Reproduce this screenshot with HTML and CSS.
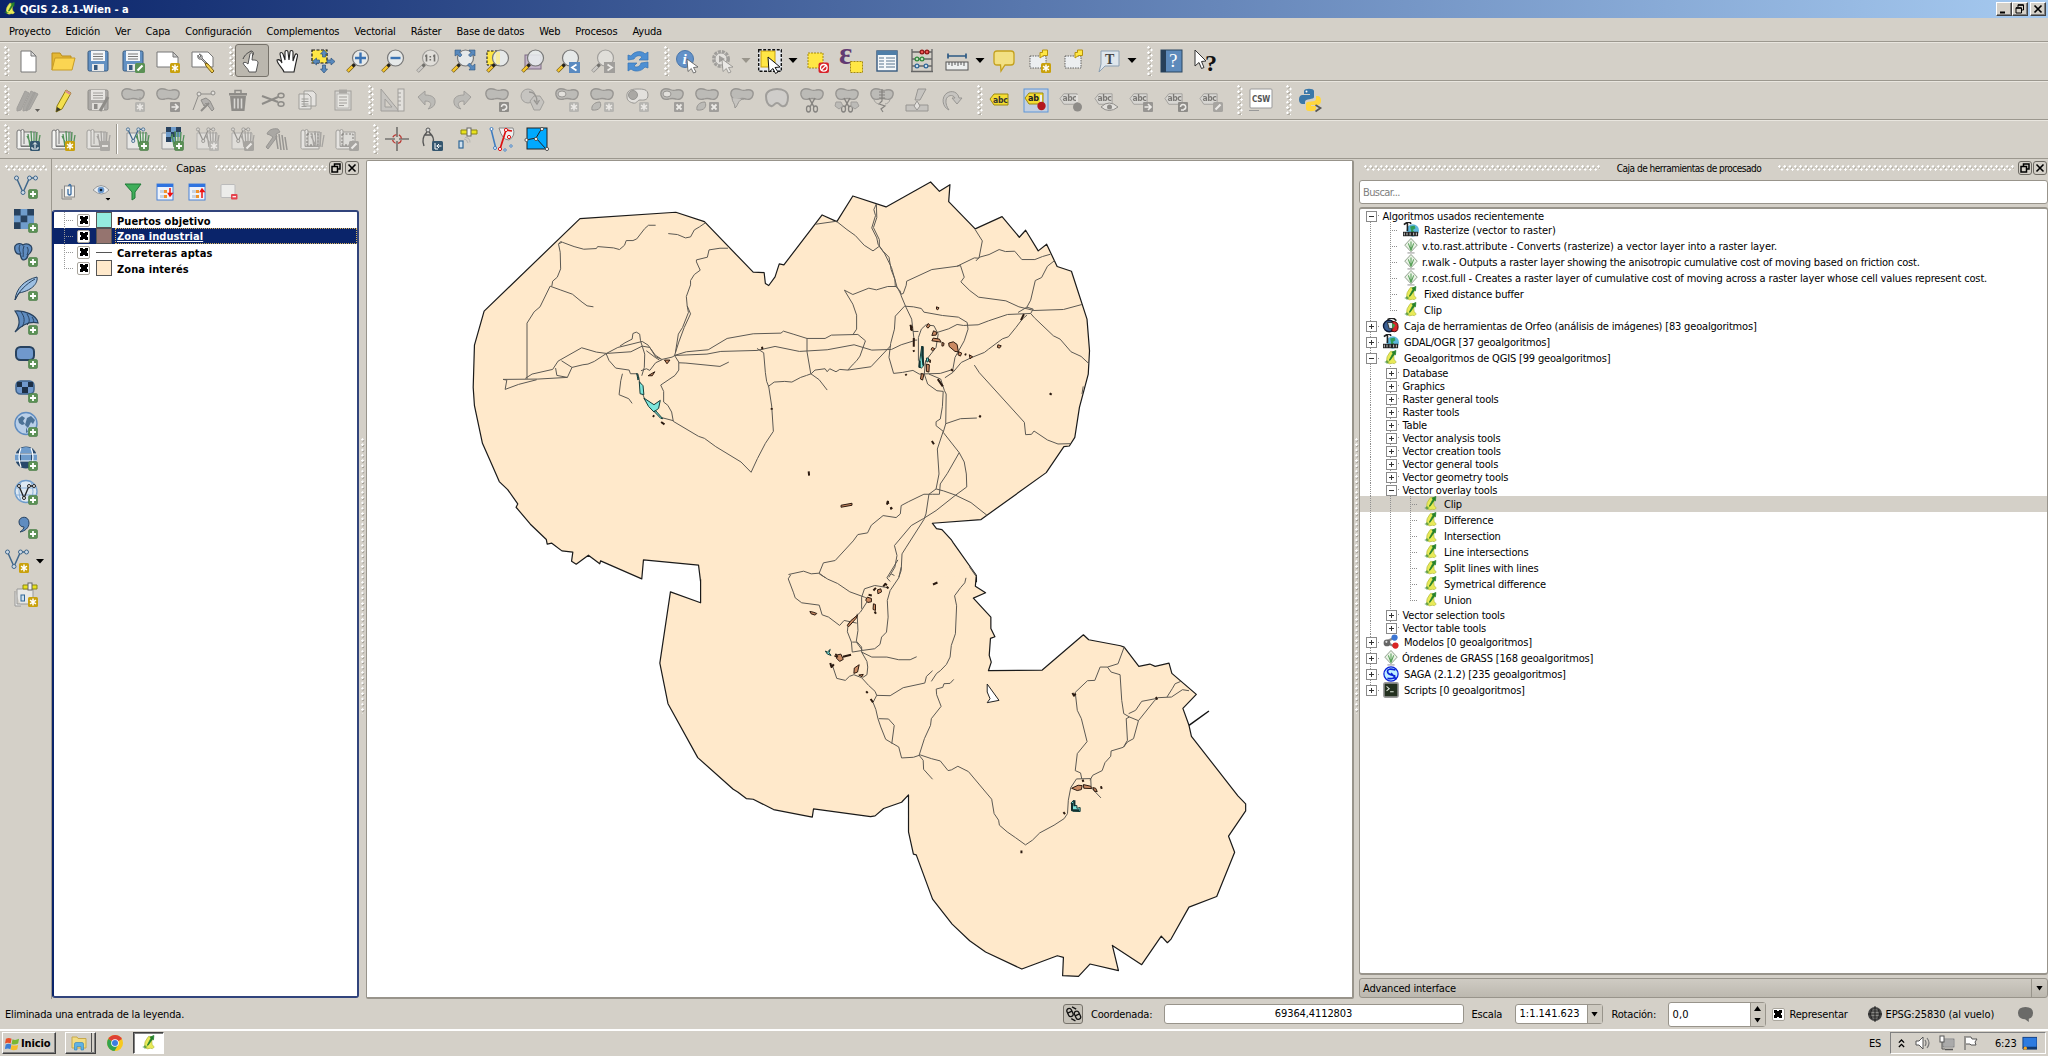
FILE: index.html
```html
<!DOCTYPE html>
<html lang="es">
<head>
<meta charset="utf-8">
<title>QGIS 2.8.1-Wien - a</title>
<link rel="stylesheet" href="styles.css">
</head>
<body>
<svg class="defs" width="0" height="0">
  <defs>
    <!-- corner badges -->
    <g id="b-plus"><rect x="14.5" y="14.5" width="9" height="9" rx="1.5" fill="#5b9155" stroke="#467a45" stroke-width=".6"/><path d="M19 16v6M16 19h6" stroke="#fff" stroke-width="1.8"/></g>
    <g id="b-star"><rect x="14" y="14" width="10" height="10" rx="1.5" fill="#c9a10c"/><path d="M19 15.5v7M16 17.2l6 3.6M22 17.2l-6 3.6" stroke="#fff" stroke-width="1.5"/></g>
    <g id="b-pen"><rect x="14" y="14" width="10" height="10" rx="1.5" fill="#5b9155"/><path d="M16.5 21.5l5-5" stroke="#fff" stroke-width="2.2"/></g>
    <g id="b-x"><rect x="14" y="14" width="10" height="10" rx="1" fill="#777"/><path d="M16.5 16.500l5 5M21.500 16.500l-5 5" stroke="#fff" stroke-width="1.8"/></g>
    <g id="b-arr"><rect x="14" y="14" width="10" height="10" rx="1" fill="#666"/><path d="M15.500 19h6M19 16l3 3-3 3" stroke="#fff" stroke-width="1.7" fill="none"/></g>
    <g id="b-rot"><rect x="14" y="14" width="10" height="10" rx="1" fill="#555"/><path d="M16.500 19a2.600 2.600 0 1 1 3 2.600M17 22h3" stroke="#fff" stroke-width="1.500" fill="none"/></g>
    <g id="b-minus"><rect x="14" y="14" width="10" height="10" rx="1" fill="#888"/><path d="M16 19h6" stroke="#fff" stroke-width="1.800"/></g>
    <g id="b-up"><rect x="14" y="14" width="10" height="10" rx="1.500" fill="#34566f"/><path d="M16 20v2h6v-2M19 21v-5M17.200 17.500L19 15.500l1.800 2" stroke="#fff" fill="none"/></g>
    <g id="b-lt"><rect x="13" y="13" width="11" height="11" fill="#5a8ac0"/><path d="M20.500 15.500L16 18.500l4.500 3" stroke="#fff" stroke-width="1.800" fill="none"/></g>
    <g id="b-gt"><rect x="13" y="13" width="11" height="11" fill="#777"/><path d="M16.500 15.500l4.500 3-4.500 3" stroke="#fff" stroke-width="1.800" fill="none"/></g>
    <!-- shapes shared by several icons -->
    <g id="lens"><path d="M1.500 22.500l7-7" stroke="#6a5410" stroke-width="3.600"/><path d="M1.800 22.200l5-5" stroke="#f5c52e" stroke-width="2.400"/><path d="M6.500 17.500l2.500-2.500" stroke="#222" stroke-width="2.600"/><circle cx="14.500" cy="9" r="8" fill="#e9edee" fill-opacity=".85" stroke="#777" stroke-width="1.200"/></g>
    <g id="vee"><path d="M2.500 3L9 17.500 15.500 3H22" fill="none" stroke="#3f678c" stroke-width="1.500"/><g fill="#cfdbe6" stroke="#3f678c"><circle cx="2.500" cy="3" r="2"/><circle cx="9" cy="17.500" r="2"/><circle cx="15.500" cy="3" r="2"/><circle cx="21.500" cy="3" r="2"/></g></g>
    <path id="blob" d="M1 7C0 2 4 0 8 1c4 1 5 2 8 1 5-1 8 1 7 5-1 4-4 5-7 4-3-.500-4-1-7 0-4 1-7 0-8-4z" fill="#aaa" stroke="#666" stroke-width="1.300"/>
    <g id="scroll"><path d="M4 5h16v14H4z" fill="#e6e6e4" stroke="#777"/><path d="M1 5a1.500 1.500 0 0 1 4 0v14.500h14V22H2.500A1.500 1.500 0 0 1 1 20zM5 4a1.500 1.500 0 0 1 3 0v13" fill="#f4f4f2" stroke="#777"/></g>
    <path id="grass" d="M15 20l-2-13M17 20l-1-16M19 20V5M21 20l1-15M23 20l2-12M12 9l4 8" transform="translate(-1)" stroke="#52915a" stroke-width="1.300" fill="none"/>
    <path id="cursor" d="M11 10l11 8-4.500.500 2.500 4.500-2.500 1-2.200-4.500L12 22.500z" fill="#fff" stroke="#555" stroke-width=".8"/>
    <path id="tag" d="M0 9l4-5h14v11H4z"/>

    <g id="i-new"><path d="M5 2h10l5 5v16H5z" fill="#fff" stroke="#777"/><path d="M15 2v5h5z" fill="#ddd" stroke="#777"/></g>
    <g id="i-open"><path d="M1 21V4h8l2 3h9v3" fill="#e5b835" stroke="#b98c1c"/><path d="M1 21L4 9h20l-3 12z" fill="#fbd552" stroke="#c79b25"/></g>
    <g id="i-save"><rect x="2" y="2" width="20" height="20" rx="1.500" fill="#6391c3" stroke="#36597e"/><path d="M5 2h14v10H5z" fill="#f4f6f8"/><path d="M7 5h10M7 7.500h10M7 10h10" stroke="#777"/><rect x="6" y="15" width="12" height="7" fill="#e8e8e8"/><rect x="8" y="16" width="3.500" height="5" fill="#36597e"/></g>
    <g id="i-compose"><path d="M1 3h16l5 5v10H1z" fill="#fff" stroke="#777"/><path d="M17 3v5h5z" fill="#ccc" stroke="#777"/></g>
    <g id="i-manage"><path d="M1 3h16l5 5v10H1z" fill="#fff" stroke="#777"/><path d="M7 6c-1 3 1 5 3 4l7 7 1-1-7-7c1-2-1-4-3-4l2 2-1.500 1.500z" fill="#bbb" stroke="#555" stroke-width=".800"/><path d="M14 14l3 1 6 7-2 2-6-7z" fill="#f1cf4e" stroke="#7a5f14"/></g>
    <g id="i-touch"><path d="M9 23C8 19 4 17 3 14c1-1 3-1 5 1L10 5c1-2 3-1 2.600 1L12 11c3 0 6 0 6 3l-2 9z" fill="#fff" stroke="#555"/><path d="M3 10c2-5 5-6 8-8M11 2c3 0 3 4 1 5" fill="none" stroke="#444"/></g>
    <g id="i-hand"><path d="M8 23C7 19 1 15 1 11c2-1 4 1 5 3L4 5c0-2 2-2 3 0l2 6L9 3c0-2 3-2 3 0l1 8 1-8c0-2 3-2 3 0v9l2-6c1-2 3-1 2.500 1C20 13 19 18 18 23z" fill="#fff" stroke="#222" stroke-width="1.100"/></g>
    <g id="i-pansel"><path d="M1 1h15v13H1z" fill="#ffe745" stroke="#111" stroke-dasharray="3 1.500" stroke-width="1.200"/><path d="M13 1l3.500 4h-2v3h-3V5h-2zM13 24l3.500-4h-2v-4h-3v4h-2zM1.500 12.500l4-3.500v2h3v3h-3v2zM24 12.500L20 9v2h-4v3h4v2z" fill="#5889bd" stroke="#2f557e" stroke-width=".700"/></g>
    <g id="i-zin"><use href="#lens"/><path d="M14.500 3.500v11M9 9h11" stroke="#3a73b4" stroke-width="2.400"/></g>
    <g id="i-zout"><use href="#lens"/><path d="M9.500 9h10" stroke="#3a73b4" stroke-width="2.400"/></g>
    <g id="i-z11"><use href="#lens"/><path d="M10.500 5.500v7M9 7h1.500M18.500 5.500v7M17 7h1.500M14.300 7v1.500M14.300 10v1.500" stroke="#222" stroke-width="1.600"/></g>
    <g id="i-zfull"><use href="#lens"/><path d="M4 1h6L8.500 3 11 6 9 8 6.500 5.500 4 7zM24 1v6l-2-1.500L19.500 8l-2-2L20 3.500 18 1zM24 21h-6l1.500-2-3-3 2-2 3 3L24 15z" fill="#5889bd" stroke="#2f557e" stroke-width=".600"/></g>
    <g id="i-zsel"><rect x="1" y="2" width="12" height="14" fill="#ffe745" stroke="#111" stroke-dasharray="2.500 1.500"/><use href="#lens"/><path d="M10 3h4v12h-4z" fill="#f7eca0"/></g>
    <g id="i-zlay"><rect x="4" y="6" width="16" height="14" fill="#c3b4c8" stroke="#7d6a84"/><use href="#lens"/></g>
    <g id="i-zlast"><use href="#lens"/><use href="#b-lt"/></g>
    <g id="i-znext"><use href="#lens"/><use href="#b-gt"/></g>
    <g id="i-refresh"><path d="M2 11V6l3 1c4-6 12-5 14-2l3-2v8h-9l3-3c-2-2-6-2-8 2zM22 13v6l-3-1c-4 5-11 5-14 2l-3 2v-8h9l-3 3c2 2 6 1 7-3z" fill="#4d8fd3" stroke="#3574b4" stroke-width=".700"/></g>
    <g id="i-info"><circle cx="9" cy="10" r="8.500" fill="#6391c8" stroke="#4a77ab"/><text x="6.500" y="15" font-family="Liberation Serif,serif" font-style="italic" font-weight="700" font-size="15" fill="#fff">i</text><use href="#cursor"/></g>
    <g id="i-action"><circle cx="10" cy="10" r="7.500" fill="#eee" stroke="#777" stroke-width="3" stroke-dasharray="3 1"/><circle cx="10" cy="10" r="6" fill="#eee" stroke="#777"/><path d="M8 6.500l6 3.500-6 3.500z" fill="#777"/><use href="#cursor"/></g>
    <g id="i-select"><rect x="0" y="0" width="24" height="22" fill="#e8ecf2"/><rect x="3" y="2" width="14" height="16" fill="#ffe745" stroke="#c9a10c"/><rect x=".7" y=".7" width="22.600" height="21.600" fill="none" stroke="#111" stroke-width="1.400" stroke-dasharray="3 1.500"/><path d="M10 8l12 10-5 .500 3 4.500-2.500 1.500-2.500-5-4 3.500z" fill="#fff" stroke="#111"/></g>
    <g id="i-desel"><rect x="3" y="4" width="15" height="15" fill="#ffe745" stroke="#a58a12" stroke-dasharray="2 1"/><rect x="13.500" y="13.500" width="10.500" height="10.500" rx="2" fill="#d8232a"/><circle cx="18.800" cy="18.800" r="3.300" fill="none" stroke="#fff" stroke-width="1.300"/><path d="M16.500 21l4.500-4.500" stroke="#fff" stroke-width="1.300"/></g>
    <g id="i-expr"><text x="-1" y="15" font-family="Liberation Serif,serif" font-weight="700" font-size="31" fill="#623a72">ε</text><rect x="10.500" y="12.500" width="12" height="11" fill="#ffe745" stroke="#a58a12" stroke-dasharray="2 1"/></g>
    <g id="i-table"><rect x="2" y="2" width="20" height="20" fill="#f5f8fa" stroke="#36597e" stroke-width="1.400"/><path d="M2 2h20v4H2z" fill="#4e7ea8"/><path d="M4 9h5M11 9h9M4 12h5M11 12h9M4 15h5M11 15h9M4 18h5M11 18h9" stroke="#59758d" stroke-width="1.200"/></g>
    <g id="i-abacus"><path d="M2 0v22M22 0v22M1 22.500h22M2 3h20M2 10h20M2 17h20" stroke="#666" stroke-width="1.300" fill="none"/><g stroke-width="1.200"><g fill="#e55" stroke="#901515"><circle cx="12" cy="3" r="1.900"/><circle cx="17" cy="3" r="1.900"/></g><g fill="#bdb" stroke="#2e8a3a"><circle cx="7" cy="10" r="1.900"/><circle cx="12" cy="10" r="1.900"/></g><g fill="#cde" stroke="#2f6797"><circle cx="7" cy="17" r="1.900"/><circle cx="16" cy="17" r="1.900"/></g></g></g>
    <g id="i-ruler"><path d="M3 7h18M3 4.500v5M21 4.500v5" stroke="#2d5a84" stroke-width="1.700"/><rect x="1" y="13" width="22" height="8" fill="#eef0f0" stroke="#555"/><path d="M4 13v3M7 13v4M10 13v3M13 13v4M16 13v3M19 13v4" stroke="#555"/></g>
    <g id="i-bubble"><path d="M5 2h14q3 0 3 3v8q0 3-3 3h-6l-4 6-.5-6H5q-3 0-3-3V5q0-3 3-3z" fill="#f2e083" stroke="#c4a01c" stroke-width="1.300"/></g>
    <g id="i-label"><rect x="3" y="7" width="16" height="12" fill="#eceef0" stroke="#444" stroke-width=".8" stroke-dasharray="1.500 1"/><path d="M13 3.500h2.500V1h5v5.500h-4L13 9z" fill="#ffe745" stroke="#b7930d"/></g>
    <g id="i-text"><path d="M4 2h18v15H8l-6 6 2-8z" fill="#dfe6ec" stroke="#8b9fb3"/><text x="8" y="14.500" font-family="Liberation Serif,serif" font-weight="700" font-size="14" fill="#444">T</text></g>
    <g id="i-help"><rect x="2" y="1" width="21" height="22" fill="#5d8abb" stroke="#2b4661"/><rect x="2" y="1" width="5" height="22" fill="#27405a"/><text x="10" y="18" font-family="Liberation Serif,serif" font-size="19" fill="#fff">?</text></g>
    <g id="i-what"><path d="M1 1l11 11-4.500.500 2.500 6-2.500 1-2.500-6L1 17z" fill="#fff" stroke="#333"/><text x="11" y="22" font-family="Liberation Serif,serif" font-weight="700" font-size="24" fill="#111">?</text></g>

    <g id="i-pencils"><path d="M1 20L9 3l4 2-8 17-4 1zM7 20l8-17 4 2-8 17-4 1zM11 19l7-15 4 2-8 15-4 2z" fill="#888" stroke="#777"/></g>
    <g id="i-pencil"><path d="M6 18L15 2l5 3-9 16-6 3z" fill="#f3df4e" stroke="#8d7c13"/><path d="M15 2l5 3-1 2-5-3z" fill="#d98f8f"/><path d="M5 24l1-5 4 2.500z" fill="#3b3b2b"/></g>
    <g id="i-node"><path d="M2 22L8 6h14" fill="none" stroke="#555"/><circle cx="8" cy="6" r="2" fill="#eee" stroke="#555"/><circle cx="22" cy="5" r="2" fill="#eee" stroke="#555"/><path d="M10 12l5-2 4 3 4 8-2 2-6-8-2 3z" fill="#999" stroke="#555"/><path d="M18 15l-8 8" stroke="#555" stroke-width="2"/></g>
    <g id="i-trash"><path d="M4 8h16l-1.500 15h-13z" fill="#555"/><path d="M3 5h18v2.500H3z" fill="#555"/><path d="M9 5V2.500h6V5" fill="none" stroke="#555" stroke-width="1.500"/><path d="M8.500 10.500v10M12 10.500v10M15.500 10.500v10" stroke="#ddd" stroke-width="1.600"/></g>
    <g id="i-cut"><path d="M1 8l16 6M1 16l16-7" stroke="#555" stroke-width="2"/><ellipse cx="20" cy="7.500" rx="3" ry="2.300" fill="none" stroke="#555" stroke-width="1.500"/><ellipse cx="20" cy="16" rx="3" ry="2.300" fill="none" stroke="#555" stroke-width="1.500"/></g>
    <g id="i-copy"><path d="M8 3h9l3 3v12H8zM3 6h9l3 3v12H3z" fill="#f4f4f4" stroke="#777"/><path d="M5.500 11h7M5.500 13.500h7M5.500 16h7M5.500 18.500h5" stroke="#777"/></g>
    <g id="i-paste"><rect x="4" y="3" width="16" height="19" fill="#ddd" stroke="#777"/><rect x="6" y="6" width="12" height="14" fill="#f8f8f8" stroke="#888" stroke-width=".700"/><rect x="8" y="1.500" width="8" height="4" fill="#888"/><path d="M8 9h8M8 12h8M8 15h8M8 17.500h5" stroke="#777"/></g>
    <g id="i-square"><path d="M1 1v22h18zM5 11v8h7z" fill="#bbb" fill-rule="evenodd" stroke="#777"/><rect x="18" y="1" width="6" height="22" fill="#eee" stroke="#777"/><path d="M18 5h3M18 9h3M18 13h3M18 17h3" stroke="#777"/></g>
    <g id="i-undo"><path d="M3 9l7-6v4c6 0 11 2 10 8-.5 3-3 5-7 6 4-4 4-8-3-8v4z" fill="#aaa" stroke="#777"/></g>
    <g id="i-simplify"><circle cx="8" cy="8" r="7" fill="#bbb" stroke="#777"/><path d="M10 13l4-5h6l4 6-4 8h-6z" fill="#bbb" stroke="#777"/><path d="M9 4c5 0 8 4 8 10M14 12l3 4 2.500-4" fill="none" stroke="#666" stroke-width="1.300"/></g>
    <g id="i-ring"><use href="#blob"/><ellipse cx="7" cy="6" rx="4" ry="3" fill="#eee" stroke="#666"/></g>
    <g id="i-part"><use href="#blob"/><path d="M2 22c-1-4 2-8 8-8 2 4 0 9-8 8z" fill="#aaa" stroke="#666"/></g>
    <g id="i-fillring"><path d="M2 9C1 3 6 1 12 1s11 0 11 6-5 5-8 5-3 4-7 3-6-3-6-6z" fill="#eee" stroke="#666"/><circle cx="8" cy="7" r="4.500" fill="#888" stroke="#666"/></g>
    <g id="i-reshape"><use href="#blob"/><path d="M2 10c0 4 3 5 3 10 3-2 3-9 9-9" fill="#bbb" stroke="#666"/></g>
    <path id="i-offset" d="M1 8c0-5 6-7 11-7s11 2 11 8-2 10-6 9c-3-1-2-3-5-3s-3 4-6 3-5-5-5-10z" fill="#ccc" stroke="#777" stroke-width="2"/>
    <g id="i-split"><use href="#blob"/><path d="M9 10l5 9M15 10l-5 9" stroke="#444" stroke-width="1.500"/><ellipse cx="8.500" cy="21" rx="2" ry="3" fill="none" stroke="#444" stroke-width="1.300"/><ellipse cx="15.500" cy="21" rx="2" ry="3" fill="none" stroke="#444" stroke-width="1.300"/></g>
    <g id="i-merge"><use href="#blob"/><path d="M12 1v12l-3 3 6 2-4 3 2 3M9 4h6M9 7h6M9 10h6" stroke="#444" fill="none" stroke-width="1.200"/><path d="M4 11c0 3 3 5 6 5M20 11c0 3-3 5-5 5" fill="none" stroke="#777"/></g>
    <g id="i-mergeattr"><path d="M13 1h8l-6 11h-5zM1 17h22v6H1z" fill="#bbb" stroke="#666"/><path d="M12 13l3 5-3 4-3-4z" fill="#eee" stroke="#666"/></g>
    <path id="i-rotsym" d="M9 22C2 19 1 9 7 5c5-3 11-1 12 5h3l-5 6-5-6h3c-2-4-8-3-9 2-.5 4 1 7 3 10z" fill="#bbb" stroke="#666"/>
    <g id="i-abc"><use href="#tag" transform="translate(1 2)" fill="#f4dc32" stroke="#9d8a10"/><text x="4" y="15" font-family="DejaVu Sans Condensed,sans-serif" font-weight="700" font-size="8.500" fill="#333" textLength="14.500">abc</text></g>
    <g id="i-abcpin"><rect x="0" y="1" width="24" height="23" fill="#c3cfe0" stroke="#5e96d8"/><use href="#tag" transform="translate(1 1)" fill="#f4dc32" stroke="#9d8a10"/><text x="4" y="13" font-family="DejaVu Sans Condensed,sans-serif" font-weight="700" font-size="9" fill="#222">ab</text><path d="M17 14V7" stroke="#eee" stroke-width="2"/><circle cx="17.500" cy="18" r="4.200" fill="#b3161e"/></g>
    <g id="i-abcg"><use href="#tag" transform="translate(1 2) scale(.95)" fill="#ddd" stroke="#777"/><text x="3.500" y="13" font-family="DejaVu Sans Condensed,sans-serif" font-weight="700" font-size="8.500" fill="#333" textLength="14">abc</text></g>
    <g id="i-pin"><use href="#i-abcg"/><path d="M18 14V7" stroke="#eee" stroke-width="2"/><circle cx="18.500" cy="19" r="4.500" fill="#555"/></g>
    <g id="i-eye"><use href="#i-abcg"/><path d="M7 19q8-8 17 0-9 7-17 0z" fill="#eee" stroke="#555"/><circle cx="15.500" cy="19" r="2.500" fill="#555"/></g>
    <g id="i-csw"><rect x="1" y="1" width="22" height="19" rx="1" fill="#fff" stroke="#999"/><path d="M0 22.500h10" stroke="#999"/><text x="3" y="13.500" font-family="DejaVu Sans Condensed,sans-serif" font-weight="700" font-size="8" fill="#555" textLength="18">CSW</text></g>
    <g id="i-python"><path d="M6 6V3c0-3 10-3 10 0v6c0 3-9 1-9 5v2H4C0 16 0 7 4 7h8V6z" fill="#3a77a8"/><circle cx="8.500" cy="3.500" r="1" fill="#fff"/><path d="M18 8h2c4 0 4 9 0 9h-7v1h5v3c0 3-10 3-10 0v-5c0-4 10-1 10-5z" fill="#ffd63e"/><path d="M17.500 17l5 3-5 3.500" fill="none" stroke="#555" stroke-width="1.700"/></g>

    <g id="i-gopen"><use href="#scroll"/><use href="#grass"/><use href="#b-up"/></g>
    <g id="i-gnew"><use href="#scroll"/><use href="#grass"/><use href="#b-star"/></g>
    <g id="i-gclose"><use href="#scroll"/><use href="#grass"/><use href="#b-minus"/></g>
    <g id="i-gvec"><path d="M2 6h20v16H2z" fill="#e8e8e6" stroke="#999"/><use href="#vee" transform="translate(1 0) scale(.8)"/><use href="#grass"/></g>
    <g id="i-gras"><path d="M2 6h18v16H2z" fill="#e8e8e6" stroke="#999"/><path d="M6 0h5v5H6zM11 5h5v5h-5zM6 10h5v5H6zM16 0h5v5h-5z" fill="#28425f"/><path d="M11 0h5v5h-5zM6 5h5v5H6zM16 5h5v5h-5zM11 10h5v5h-5z" fill="#6f9ccb"/><use href="#grass"/></g>
    <g id="i-gtool"><path d="M2 7c1-4 6-6 11-5l2 3-4 2 1 3-9 12-2-2 7-10-3-2z" fill="#888" stroke="#666"/><path d="M13 22L11 9M16 23L14 7M19 23L17 8M22 23L20 10" stroke="#666" stroke-width="1.500"/></g>
    <g id="i-greg"><use href="#scroll"/><rect x="7" y="7" width="11" height="11" fill="none" stroke="#333" stroke-dasharray="2 1.500"/></g>
    <g id="i-cross"><path d="M12 0v10M12 14v10M0 12h10M14 12h10" stroke="#444" stroke-width="1.100"/><circle cx="12" cy="12" r="4.500" fill="none" stroke="#b93a35" stroke-width="1.300" stroke-dasharray="4.500 2.600" stroke-dashoffset="-1.300"/></g>
    <g id="i-compass"><circle cx="8" cy="3" r="2" fill="#ddd" stroke="#555"/><path d="M7 5C2 10 2 14 4 19M9 5c5 5 5 8 4 10M5 8h6" fill="none" stroke="#555" stroke-width="1.400"/><rect x="12" y="14" width="11" height="10" rx="1.500" fill="#34566f"/><path d="M15 16v6h3M21.500 19h-5M19 17l-2 2 2 2" stroke="#fff" fill="none"/></g>
    <g id="i-gps"><path d="M6 3h16v4H6z" fill="#e9e21d" stroke="#8b8714"/><rect x="12" y="1" width="4" height="8" fill="#eee" stroke="#666"/><rect x="4" y="14" width="4" height="7" fill="#cfe0ee" stroke="#2f6797" stroke-width="1.200"/><path d="M9 12q3 0 4 4M10 10.500q5 0 5 5" fill="none" stroke="#aaa" stroke-width=".800"/></g>
    <g id="i-topo"><path d="M1 2l5 20" stroke="#3f7dc0" stroke-width="1.500"/><path d="M9 1h14q3 8-4 12-7 0-10-12z" fill="#eee" stroke="#888"/><path d="M10 22l6-19 6 1" fill="none" stroke="#d11" stroke-width="1.700"/><g fill="#fff" stroke="#d11"><circle cx="16" cy="3" r="1.600"/><circle cx="19" cy="10" r="1.600"/><circle cx="10" cy="22" r="1.600"/></g><g fill="#fff" stroke="#3f7dc0"><circle cx="1.500" cy="2" r="1.500"/><circle cx="5" cy="21" r="1.500"/><circle cx="15" cy="23" r="1.200"/><circle cx="21" cy="19" r="1.200"/></g></g>
    <g id="i-topol"><rect x="2" y="1" width="20" height="21" fill="#00a9ff" stroke="#222"/><path d="M1 13l10-2 6-10M11 11l10 11" fill="none" stroke="#222"/><g fill="#fff" stroke="#555"><circle cx="17" cy="2" r="1.600"/><circle cx="1.500" cy="13" r="1.600"/><circle cx="11" cy="12" r="1.600"/><circle cx="22" cy="22" r="1.600"/></g></g>

    <g id="l-ras"><path d="M0 0h20v20H0z" fill="#6f9ccb"/><path d="M0 0h6.600v6.600H0zM13.300 0H20v6.600h-6.700zM6.600 6.600h6.700v6.700H6.600zM0 13.300h6.600V20H0z" fill="#28425f"/><use href="#b-plus"/></g>
    <g id="l-pg"><path d="M1 3c2-3 6-3 8-1 3-2 6-1 8 1 2 3 0 7-3 9-1 5-6 7-7 2l-1-3C2 12 0 7 1 3z" fill="#5f8cc0" stroke="#28425f" stroke-width="1.300"/><path d="M6 2C4 6 6 9 7 11M10 3c-2 5 0 7-1 11M13 4c2 3 1 5 0 8" fill="none" stroke="#28425f"/><use href="#b-plus"/></g>
    <g id="l-feather"><path d="M1 23C2 12 10 3 23 0c1 5-3 13-18 16z" fill="#9dbfe2" stroke="#28425f"/><path d="M1 23C5 14 12 7 21 2" fill="none" stroke="#28425f"/><use href="#b-plus"/></g>
    <g id="l-mssql"><path d="M1 0c9-1 22 4 23 12-8-2-15 1-23 9C7 14 6 7 1 0z" fill="#5f8cc0" stroke="#28425f" stroke-width="1.200"/><path d="M7 1c4 5 4 10 1 15M13 3c3 5 3 8 0 11M18 6c2 3 2 4 1 6" fill="none" stroke="#28425f"/><use href="#b-plus"/></g>
    <g id="l-ora"><rect x="2" y="2" width="18" height="13" rx="4.500" fill="#7098cc" stroke="#28425f" stroke-width="2"/><use href="#b-plus"/></g>
    <g id="l-orar"><rect x="2" y="2" width="18" height="13" rx="4.500" fill="#7098cc" stroke="#3d628c" stroke-width="1.500"/><path d="M3 3h5v5H3zM14 3h5v5h-5zM8 8h6v6H8z" fill="#1d3047"/><use href="#b-plus"/></g>
    <g id="l-wms"><circle cx="12" cy="10.500" r="11" fill="#b9cfe8" stroke="#5f8cc0" stroke-width="1.400"/><path d="M4 6l4-3 3 2-2 3 2 3-3 1-3-2zM13 5l4-2 4 4-2 4-2-2-3 6-3-3zM12 14l2 5-2 1z" fill="#4c7296"/><use href="#b-plus"/></g>
    <g id="l-wcs"><circle cx="12" cy="10.500" r="11" fill="#28486b"/><path d="M6 2Q9 0 12 0t6 2l1 4H5zM1 7h5v7H1zM18 7h5v7h-5zM7 7h10v7H7z" fill="#6f9ccb"/><path d="M1 7h22M1 14h22M7 1q-4 9 0 19M17 1q4 9 0 19" fill="none" stroke="#fff" stroke-width="1.200"/><use href="#b-plus"/></g>
    <g id="l-wfs"><circle cx="12" cy="10.500" r="11" fill="#dfe9f2" stroke="#6f9ccb" stroke-width="1.300"/><path d="M1 7h22M1 14h22M7 1q-4 9 0 19M17 1q4 9 0 19" fill="none" stroke="#8ab0d8"/><path d="M5 5l5 12 5-12h5" fill="none" stroke="#222" stroke-width="1.300"/><g fill="#fff" stroke="#222"><circle cx="5" cy="5" r="1.500"/><circle cx="10" cy="17" r="1.500"/><circle cx="15" cy="5" r="1.500"/><circle cx="20" cy="5" r="1.500"/></g><use href="#b-plus"/></g>
    <g id="l-comma"><path d="M5 7c0-6 10-7 10 1 0 5-4 8-9 9 3-2 4-4 4-5-3 0-5-2-5-5z" fill="#5f8cc0" stroke="#28425f"/><use href="#b-plus"/></g>
    <g id="l-gps"><path d="M3 6h16v15H3zM1 8v15h6" fill="#e8e8e6" stroke="#999"/><path d="M9 2h14v4H9z" fill="#e9e21d" stroke="#8b8714"/><rect x="14" y="0" width="4" height="7" fill="#eee" stroke="#666"/><rect x="7" y="12" width="3.500" height="6" fill="#cfe0ee" stroke="#2f6797"/><use href="#b-star"/></g>

    <!-- processing providers, 18px grid -->
    <g id="p-qgis"><path d="M8.500 1.500q4-.500 5 2-2 4-1 7 1 2 2.500 3-2 3-4.500 1.500-4 2-6.500-1.500-1-6 4.500-12z" fill="#e9ea58" stroke="#a3ab3a" stroke-width=".600"/><path d="M14.500.5l-.5 5-1-1-5 7h-1l4.500-8.500-1.500-.500zM2 13.500h5M4.500 11.500v4" fill="#23802b" stroke="#23802b" stroke-width=".800"/></g>
    <g id="p-gdal"><circle cx="11" cy="9.500" r="7" fill="#5db7dd"/><path d="M8 5l5-1 1 3-3 2 3 4-4 2z" fill="#2f9c56"/><path d="M0 11h17v5H0z" fill="#222"/><path d="M1.500 12v3M4.500 12v3M8 12v3M12 12v3M15 12v3" stroke="#ddd" stroke-width="1"/><path d="M1 3q6-5 8-1M5 1v9" fill="none" stroke="#222" stroke-width="1.800"/></g>
    <g id="p-grass"><path d="M9 .5l7 7.500-7 7.500L2 8z" fill="#e9f2e5" stroke="#8fa08c" stroke-width="1.100"/><path d="M9 14L6 6M9 14V4M9 14l3-8" stroke="#58a058" stroke-width="1.200"/><path d="M5 16.800h8" stroke="#999" stroke-width="1.200"/></g>
    <g id="p-otb"><circle cx="7" cy="9" r="6.500" fill="#3a5f94" stroke="#0d1a38" stroke-width="1.500"/><path d="M10 4q7-1 7 6t-7 5z" fill="#d8252b" stroke="#300"/><path d="M5 5h6v7H7z" fill="#dce8ef" stroke="#222"/><path d="M10 6l4 2-3 4z" fill="#3aa04b"/><path d="M5 2q6-4 10 1" fill="none" stroke="#222" stroke-width="1.800"/></g>
    <g id="p-model"><path d="M3 9l10-5M5 10l8 4" stroke="#888" stroke-width="2.500"/><circle cx="4.500" cy="10" r="3.800" fill="#666"/><circle cx="13" cy="4" r="3.500" fill="#3c75d2"/><circle cx="14" cy="13" r="3.500" fill="#d92525"/><circle cx="3.800" cy="8.800" r="1.200" fill="#ddd"/></g>
    <g id="p-saga"><circle cx="9" cy="9" r="8" fill="#bff0ff" stroke="#0a22d8" stroke-width="1.400"/><path d="M14 4.500Q5 2 5 6t8 5q1 4-8 3M9 8l6 7" fill="none" stroke="#0a22d8" stroke-width="1.900"/></g>
    <g id="p-script"><rect x="1" y="1" width="16" height="16" rx="1.500" fill="#23301f" stroke="#999" stroke-width="1.800"/><path d="M4 5l3 2.500L4 10M8 11h4" fill="none" stroke="#dfe8dc" stroke-width="1.200"/></g>
  </defs>
</svg>

<div class="window">
  <header class="titlebar">
    <svg width="14" height="16" viewBox="0 0 18 18"><use href="#p-qgis"/></svg>
    <h1>QGIS 2.8.1-Wien - a</h1>
    <div class="winbtns">
      <b><svg viewBox="0 0 12 10"><path d="M2 8.500h5" stroke="#000" stroke-width="2"/></svg></b>
      <b><svg viewBox="0 0 12 10"><path d="M4 3.500V.700h5.500V6H7M2 3.700h5.500V9H2zM2 4.300h5M4 1.300h5" fill="none" stroke="#000"/></svg></b>
      <b class="gap"><svg viewBox="0 0 12 10"><path d="M2.500 1.500l7 7M9.500 1.500l-7 7" stroke="#000" stroke-width="1.700"/></svg></b>
    </div>
  </header>
  <nav class="menubar"><span>Proyecto</span><span>Edición</span><span>Ver</span><span>Capa</span><span>Configuración</span><span>Complementos</span><span>Vectorial</span><span>Ráster</span><span>Base de datos</span><span>Web</span><span>Procesos</span><span>Ayuda</span></nav>

  <div class="toolbar">
    <i class="grip first"></i>
    <svg class="ic" viewBox="0 0 24 24"><use href="#i-new"/></svg>
    <svg class="ic" viewBox="0 0 24 24"><use href="#i-open"/></svg>
    <svg class="ic" viewBox="0 0 24 24"><use href="#i-save"/></svg>
    <svg class="ic" viewBox="0 0 24 24"><use href="#i-save"/><use href="#b-pen"/></svg>
    <svg class="ic" viewBox="0 0 24 24"><use href="#i-compose"/><use href="#b-star"/></svg>
    <svg class="ic" viewBox="0 0 24 24"><use href="#i-manage"/></svg>
    <i class="grip"></i>
    <span class="pressed"><svg viewBox="0 0 24 24"><use href="#i-touch"/></svg></span>
    <svg class="ic" viewBox="0 0 24 24"><use href="#i-hand"/></svg>
    <svg class="ic" viewBox="0 0 24 24"><use href="#i-pansel"/></svg>
    <svg class="ic" viewBox="0 0 24 24"><use href="#i-zin"/></svg>
    <svg class="ic" viewBox="0 0 24 24"><use href="#i-zout"/></svg>
    <svg class="ic off" viewBox="0 0 24 24"><use href="#i-z11"/></svg>
    <svg class="ic" viewBox="0 0 24 24"><use href="#i-zfull"/></svg>
    <svg class="ic" viewBox="0 0 24 24"><use href="#i-zsel"/></svg>
    <svg class="ic" viewBox="0 0 24 24"><use href="#i-zlay"/></svg>
    <svg class="ic" viewBox="0 0 24 24"><use href="#i-zlast"/></svg>
    <svg class="ic off" viewBox="0 0 24 24"><use href="#i-znext"/></svg>
    <svg class="ic" viewBox="0 0 24 24"><use href="#i-refresh"/></svg>
    <i class="grip"></i>
    <svg class="ic" viewBox="0 0 24 24"><use href="#i-info"/></svg>
    <svg class="ic off" viewBox="0 0 24 24"><use href="#i-action"/></svg>
    <i class="drop dim"></i>
    <svg class="ic" viewBox="0 0 24 24"><use href="#i-select"/></svg>
    <i class="drop"></i>
    <svg class="ic" viewBox="0 0 24 24"><use href="#i-desel"/></svg>
    <svg class="ic" viewBox="0 0 24 24"><use href="#i-expr"/></svg>
    <svg class="ic" viewBox="0 0 24 24"><use href="#i-table"/></svg>
    <svg class="ic" viewBox="0 0 24 24"><use href="#i-abacus"/></svg>
    <svg class="ic" viewBox="0 0 24 24"><use href="#i-ruler"/></svg>
    <i class="drop"></i>
    <svg class="ic" viewBox="0 0 24 24"><use href="#i-bubble"/></svg>
    <svg class="ic" viewBox="0 0 24 24"><use href="#i-label"/><use href="#b-star"/></svg>
    <svg class="ic" viewBox="0 0 24 24"><use href="#i-label"/></svg>
    <svg class="ic" viewBox="0 0 24 24"><use href="#i-text"/></svg>
    <i class="drop"></i>
    <i class="grip"></i>
    <svg class="ic" viewBox="0 0 24 24"><use href="#i-help"/></svg>
    <svg class="ic" viewBox="0 0 24 24"><use href="#i-what"/></svg>
  </div>

  <div class="toolbar">
    <i class="grip first"></i>
    <svg class="ic off" viewBox="0 0 24 24"><use href="#i-pencils"/><path d="M19 21h5l-2.500 3z" fill="#000"/></svg>
    <svg class="ic" viewBox="0 0 24 24"><use href="#i-pencil"/></svg>
    <svg class="ic off" viewBox="0 0 24 24"><use href="#i-save"/><path d="M14 23l8-14" stroke="#555" stroke-width="3"/></svg>
    <svg class="ic off" viewBox="0 0 24 24"><use href="#blob"/><path d="M19 9v4" stroke="#777"/><use href="#b-star"/></svg>
    <svg class="ic off" viewBox="0 0 24 24"><use href="#blob"/><use href="#b-arr"/></svg>
    <svg class="ic off" viewBox="0 0 24 24"><use href="#i-node"/></svg>
    <svg class="ic off" viewBox="0 0 24 24"><use href="#i-trash"/></svg>
    <svg class="ic off" viewBox="0 0 24 24"><use href="#i-cut"/></svg>
    <svg class="ic off" viewBox="0 0 24 24"><use href="#i-copy"/></svg>
    <svg class="ic off" viewBox="0 0 24 24"><use href="#i-paste"/></svg>
    <i class="grip tight"></i>
    <svg class="ic off" viewBox="0 0 24 24"><use href="#i-square"/></svg>
    <svg class="ic off" viewBox="0 0 24 24"><use href="#i-undo"/></svg>
    <svg class="ic off" viewBox="0 0 24 24"><use href="#i-undo" transform="matrix(-1 0 0 1 24 0)"/></svg>
    <svg class="ic off" viewBox="0 0 24 24"><use href="#blob"/><use href="#b-rot"/></svg>
    <svg class="ic off" viewBox="0 0 24 24"><use href="#i-simplify"/></svg>
    <svg class="ic off" viewBox="0 0 24 24"><use href="#i-ring"/><use href="#b-star"/></svg>
    <svg class="ic off" viewBox="0 0 24 24"><use href="#i-part"/><use href="#b-star"/></svg>
    <svg class="ic off" viewBox="0 0 24 24"><use href="#i-fillring"/><use href="#b-star"/></svg>
    <svg class="ic off" viewBox="0 0 24 24"><use href="#i-ring"/><use href="#b-x"/></svg>
    <svg class="ic off" viewBox="0 0 24 24"><use href="#i-part"/><use href="#b-x"/></svg>
    <svg class="ic off" viewBox="0 0 24 24"><use href="#i-reshape"/></svg>
    <svg class="ic off" viewBox="0 0 24 24"><use href="#i-offset"/></svg>
    <svg class="ic off" viewBox="0 0 24 24"><use href="#i-split"/></svg>
    <svg class="ic off" viewBox="0 0 24 24"><use href="#i-split"/><path d="M1 14h5l2 4-4 3-4-3zM16 14h6l2 4-4 3-4-3z" fill="#aaa" stroke="#777"/></svg>
    <svg class="ic off" viewBox="0 0 24 24"><use href="#i-merge"/></svg>
    <svg class="ic off" viewBox="0 0 24 24"><use href="#i-mergeattr"/></svg>
    <svg class="ic off" viewBox="0 0 24 24"><use href="#i-rotsym"/></svg>
    <i class="grip tight"></i>
    <svg class="ic" viewBox="0 0 24 24"><use href="#i-abc"/></svg>
    <svg class="ic" viewBox="0 0 24 24"><use href="#i-abcpin"/></svg>
    <svg class="ic off" viewBox="0 0 24 24"><use href="#i-pin"/></svg>
    <svg class="ic off" viewBox="0 0 24 24"><use href="#i-eye"/></svg>
    <svg class="ic off" viewBox="0 0 24 24"><use href="#i-abcg"/><use href="#b-arr"/></svg>
    <svg class="ic off" viewBox="0 0 24 24"><use href="#i-abcg"/><use href="#b-rot"/></svg>
    <svg class="ic off" viewBox="0 0 24 24"><use href="#i-abcg"/><use href="#b-pen"/></svg>
    <i class="grip"></i>
    <svg class="ic" viewBox="0 0 24 24"><use href="#i-csw"/></svg>
    <i class="grip tight"></i>
    <svg class="ic" viewBox="0 0 24 24"><use href="#i-python"/></svg>
  </div>

  <div class="toolbar">
    <i class="grip first"></i>
    <svg class="ic" viewBox="0 0 24 24"><use href="#i-gopen"/></svg>
    <svg class="ic" viewBox="0 0 24 24"><use href="#i-gnew"/></svg>
    <svg class="ic off" viewBox="0 0 24 24"><use href="#i-gclose"/></svg>
    <i class="sep"></i>
    <svg class="ic" viewBox="0 0 24 24"><use href="#i-gvec"/><use href="#b-plus"/></svg>
    <svg class="ic" viewBox="0 0 24 24"><use href="#i-gras"/><use href="#b-plus"/></svg>
    <svg class="ic off" viewBox="0 0 24 24"><use href="#i-gvec"/><use href="#b-star"/></svg>
    <svg class="ic off" viewBox="0 0 24 24"><use href="#i-gvec"/><use href="#b-pen"/></svg>
    <svg class="ic off" viewBox="0 0 24 24"><use href="#i-gtool"/></svg>
    <svg class="ic off" viewBox="0 0 24 24"><use href="#i-greg"/><use href="#grass"/></svg>
    <svg class="ic off" viewBox="0 0 24 24"><use href="#i-greg"/><use href="#b-pen"/></svg>
    <i class="grip wide"></i>
    <svg class="ic" viewBox="0 0 24 24"><use href="#i-cross"/></svg>
    <svg class="ic" viewBox="0 0 24 24"><use href="#i-compass"/></svg>
    <svg class="ic" viewBox="0 0 24 24"><use href="#i-gps"/></svg>
    <svg class="ic" viewBox="0 0 24 24"><use href="#i-topo"/></svg>
    <svg class="ic" viewBox="0 0 24 24"><use href="#i-topol"/></svg>
  </div>

  <main class="work">
    <aside class="sidebar">
      <i class="hgrip"></i>
      <svg viewBox="0 0 24 24"><use href="#vee"/><use href="#b-plus"/></svg>
      <svg viewBox="0 0 24 24"><use href="#l-ras"/></svg>
      <svg viewBox="0 0 24 24"><use href="#l-pg"/></svg>
      <svg viewBox="0 0 24 24"><use href="#l-feather"/></svg>
      <svg viewBox="0 0 24 24"><use href="#l-mssql"/></svg>
      <svg viewBox="0 0 24 24"><use href="#l-ora"/></svg>
      <svg viewBox="0 0 24 24"><use href="#l-orar"/></svg>
      <svg viewBox="0 0 24 24"><use href="#l-wms"/></svg>
      <svg viewBox="0 0 24 24"><use href="#l-wcs"/></svg>
      <svg viewBox="0 0 24 24"><use href="#l-wfs"/></svg>
      <svg viewBox="0 0 24 24"><use href="#l-comma"/></svg>
      <div class="withdrop"><svg viewBox="0 0 24 24"><use href="#vee"/><use href="#b-star"/></svg><i class="drop"></i></div>
      <svg viewBox="0 0 24 24"><use href="#l-gps"/></svg>
    </aside>

    <section class="dock layers">
      <div class="docktitle"><i class="hgrip"></i><span>Capas</span><i class="hgrip"></i>
        <b><svg viewBox="0 0 10 10"><path d="M3.500 3V1h5.500v5H7M1 3.500h5.500V9H1z" fill="none" stroke="#000" stroke-width="1.500"/></svg></b>
        <b><svg viewBox="0 0 10 10"><path d="M1.500 1.500l7 7M8.500 1.500l-7 7" stroke="#000" stroke-width="1.600"/></svg></b></div>
      <div class="layertools">
        <svg viewBox="0 0 18 18"><path d="M2 6v10h10" fill="none" stroke="#888"/><rect x="4.500" y="3" width="10" height="11" fill="#f4f4f2" stroke="#888"/><path d="M8 6v5q1.500 2 3 0V3q-1-3-2.500 0" fill="none" stroke="#3c6ea3" stroke-width="1.300"/></svg>
        <svg viewBox="0 0 18 18"><path d="M1 7q8-9 16 0-7 8-16 0z" fill="#e8edf2" stroke="#999"/><circle cx="9" cy="7" r="3.300" fill="#6c9bd0"/><circle cx="9" cy="7" r="1.300" fill="#123"/><path d="M13.500 15h5L16 17.500z"/></svg>
        <svg viewBox="0 0 18 18"><path d="M1 1h16l-6 8v6l-3 2V9z" fill="#3fae5a" stroke="#1f7a37"/></svg>
        <svg viewBox="0 0 18 18"><rect x="1" y="1" width="16" height="16" fill="#eef3fb" stroke="#4a82d6"/><path d="M1 1h16v3H1z" fill="#2f73e0"/><path d="M4 7h4v3H4zM4 12h4v3H4z" fill="#c7d3e3"/><path d="M8 7h3v3H8zM8 12h3v3H8z" fill="#f0922b"/><path d="M14 5v6M12.500 10.500h3.500L14 13z" fill="#e11" stroke="#e11" stroke-width="1.500"/></svg>
        <svg viewBox="0 0 18 18"><rect x="1" y="1" width="16" height="16" fill="#eef3fb" stroke="#4a82d6"/><path d="M1 1h16v3H1z" fill="#2f73e0"/><path d="M4 7h4v3H4zM4 12h4v3H4z" fill="#c7d3e3"/><path d="M8 7h3v3H8zM8 12h3v3H8z" fill="#f0922b"/><path d="M14 15V9M12.500 8.500h3.500L14 6z" fill="#e11" stroke="#e11" stroke-width="1.500"/></svg>
        <svg viewBox="0 0 18 18"><rect x="1" y="1.500" width="14" height="13" rx="1" fill="#ececea" stroke="#bbb"/><rect x="11" y="11" width="6.500" height="5.500" rx="1" fill="#e4444f"/><path d="M12.500 13.700h3.500" stroke="#fff" stroke-width="1.200"/></svg>
      </div>
      <div class="layertree">
        <div class="lrow"><i class="br"></i><i class="chk"></i><i class="sw port"></i><span>Puertos objetivo</span></div>
        <div class="lrow sel"><i class="br"></i><i class="chk"></i><i class="sw ind"></i><span>Zona industrial</span></div>
        <div class="lrow"><i class="br"></i><i class="chk"></i><i class="sw line"></i><span>Carreteras aptas</span></div>
        <div class="lrow"><i class="br end"></i><i class="chk"></i><i class="sw zone"></i><span>Zona interés</span></div>
      </div>
    </section>

    <i class="split left"></i>

    <section class="canvas">
      <svg viewBox="367 160 985 837">
        <g class="north" transform="translate(450 160) scale(.42092 .33333)">
          <path class="land" d="M595 1265L590 1214 459 1198 455 1255 357 1201 355 1210 328 1184 299 1211 288 1202 291 1175 265 1171 241 1148 230 1151 228 1137 190 1091 156 1040 160 1030 136 987 116 963 96 905 76 848 57 735 54 680 57 553 80 451 308 173 536 154 604 182 720 334 746 335 749 368 757 374 772 348 782 309 793 312 884 162 919 182 957 105 1036 138 1142 63 1163 91 1188 71 1185 122 1248 204 1312 167 1353 229 1368 208 1398 270 1418 250 1443 317 1477 331 1514 475 1520 570 1517 640 1496 740 1485 830 1472 856 1459 858 1417 936 1276 1064 1262 1077 1146 1088 1156 1104 1169 1107 1192 1139 1196 1147 1251 1245V1265"/>
          <g class="road">
            <path d="M606 186L592 198 580 207 571 228 559 231 540 221 518 218M488 193L471 193 462 203 443 234 434 239 418 239 414 253 402 266 388 261 350 257 347 263 317 265 294 257 266 244 262 242 257 250 261 274 262 324 254 349 243 361 241 376M257 249L265 244M340 438L325 435 313 424 290 400 261 387 237 376 213 438 199 453 182 487V655M125 656L208 655 278 650 289 620 315 612 327 610 342 602 371 578 429 573 456 556 474 560 488 588 503 596 527 589 534 584 610 580 643 572 729 569 772 557 830 572 896 567 960 552 1002 568 1049 566 1072 552 1105 539M130 686L134 658 125 656M130 686L162 671 205 657M178 653L194 640 243 626 256 601 312 561 347 574 371 578 398 560 434 549 456 542 470 553 487 583 500 594M250 622L253 644 278 650M264 600L289 620"/>
            <path d="M660 262L641 262 615 267 611 289 585 297 585 303 594 328 580 341 571 359 571 372 561 407 563 435 571 459 556 500 543 544 533 584 543 604 543 628 534 644 500 673 507 692V724L517 734 526 754 530 782 590 827 604 833 631 858 691 904 715 935 730 894 749 848 768 812 764 736 757 678 752 662 749 636 745 576 729 563M563 435L566 455 552 500 542 520 535 575M370 578L377 599 393 622 425 628 428 639 446 639 454 688 462 716 500 770 530 780M409 639L405 660 401 702 424 714 432 728M403 556L415 546 432 535 434 518 442 514 450 520 452 540 462 580 461 620 455 645M466 570L487 590 497 598M453 630L466 624 474 629 488 606 503 597M533 584L561 573 613 567 658 533 720 519 786 517 792 511 815 520 848 533 891 533 906 523 969 521 987 540 974 586 966 600 958 610 945 628 926 626 917 633 902 624 896 633 891 624 867 628 858 639 847 644 833 650 812 664 795 662 770 664 755 678M848 533L848 573 857 639 877 657 896 688M662 604L641 617 560 607 543 606"/>
            <path d="M937 388L957 401 995 382 1013 387 1040 377 1061 377M937 388L957 430 966 463V505L957 522M945 628L1000 618 1047 555M868 190L918 181 943 206 963 224 984 253 1005 270 1019 257M1013 129L1007 146 1011 164 1002 201 1014 231 1017 250 1029 271 1043 289 1048 326 1057 355 1058 375 1070 391 1072 405 1083 438 1097 475 1103 540M1013 129L1014 170 1006 200 1020 236 1020 256 1033 279 1049 320 1062 378 1071 400 1077 398 1084 373 1085 361 1145 326 1205 316 1246 291 1257 292 1265 240 1248 206M1250 300L1258 289 1281 281 1305 266 1320 272 1342 271 1359 296 1390 296 1408 287 1427 280M1205 316L1213 314 1222 349 1214 363 1235 389 1256 409 1321 420 1352 438 1388 449 1458 446 1502 431M1437 299L1420 316 1406 350 1391 359 1380 418 1371 439M1080 436L1101 438 1120 443 1126 454 1170 464 1208 469 1229 485 1231 505 1222 540 1200 590 1195 625M1155 516L1185 504 1205 491 1220 494 1255 492 1280 480 1325 461 1380 458 1389 471 1434 525 1450 535 1476 573 1500 587 1518 608M1350 455L1371 439 1386 445 1380 458M1080 436L1058 466 1056 505 1047 548 1043 590 1054 638 1075 635 1100 629 1115 640 1165 638 1190 628M1371 463L1360 475 1345 500 1327 528 1313 534 1280 565 1270 575 1240 590 1215 605 1195 635 1176 651"/>
            <path d="M1120 505L1131 492 1150 495 1160 520 1155 560 1130 600 1127 640 1135 670 1157 690 1172 692 1170 738 1165 775 1155 783 1155 795 1172 812 1158 865 1162 940 1155 985 1138 1001 1131 1060 1126 1077 1084 1160 1074 1180 1072 1230 1063 1262M1120 505L1113 530V600M1100 512H1113M1102 538H1110M1138 640L1166 655 1175 690 1179 700 1178 789 1172 815 1210 876 1222 904 1227 940 1228 979 1200 1005 1155 1050 1125 1074 1096 1095 1056 1155 1062 1185 1057 1220 1037 1262M1178 789L1213 774 1252 772M1210 876L1182 938 1165 970 1163 1001 1147 1001 1126 1001 1090 1023 1072 1035 1070 1060 1060 1071 1029 1065 1001 1094 992 1117 969 1122 958 1141 915 1200 887 1207 877 1238 858 1240 840 1232 804 1242M877 1238L900 1260M1155 985L1173 991 1200 1003 1238 1026 1276 1064M1246 613L1258 636 1365 785 1368 822 1382 821 1388 811 1420 838 1445 850 1474 849M1505 677L1502 700M1235 1218L1250 1245M1048 1240L1056 1245"/>
          </g>
          <g class="ind">
            <path d="M509 598h13l-7 11zM470 645l16-12-6 12zM929 1034l26-6v6l-26 6zM1136 488l5 6-5 8-4-4zM1149 510l8 5-2 8-10 1zM1148 532l15 3 4 9-22-4zM1169 545l5 2-1 8-4 1zM1185 547l11-4 9 8 3 22-8-1-14-15zM1209 573l7 4-3 9-6-4zM1234 582l8 6-6 6zM1146 560l6 4-5 6-4-4zM1132 610l7 2-1 22-6-2zM1120 638l6 3-3 17-5-3zM1302 552l8 3-4 7-5-2zM1156 438l6 3-3 6-3-2zM1094 494l5 4-4 10zM1136 596l6 2-1 8z"/>
            <path class="spot" d="M1357 478l7-18M1159 655l12 22M1425 698l5 4M1261 764l-3 6M1145 841l5 10M852 932l1 13M1041 1021l-3 11M1047 1040l2 6M501 784l8 7M481 765l4 3M764 742v5M741 558l1 8M1082 640l3 4M1190 626l6 4M1101 568l2 5M1223 580l4 2M1094 492l4 18M1102 532v26"/>
          </g>
          <g class="harbour"><path d="M443 638l5 14-2 6zM449 663l9 12 2 27-9-3zM460 712l24 20 15-13-4 24-11 11-13-17zM484 752l4-2 17 24-5-1zM1121 556l3 4 1 56-5 6-6-4zM1132 592h5v10l-4 2z"/><path class="quay" d="M1123 556l-1 28 3 30M1116 600v22"/></g>
        </g>
        <g class="south" transform="translate(640 500) scale(.40816 .33333)">
          <path class="land" d="M148 236V307L74 274 48 488 68 610 141 772 228 867 239 875 260 895 277 897 327 928 422 951 425 926 565 949 576 947 597 925 641 906 658 884V995L670 1062 677 1064 717 1197 765 1272 808 1322 847 1356 936 1407 1023 1367 1038 1372 1036 1427 1075 1429 1103 1392 1173 1412 1158 1336 1230 1394 1278 1308 1293 1328 1302 1317 1346 1221 1414 1189 1458 1056 1443 1008 1485 932V911L1466 887 1352 708 1346 675 1331 624 1364 582 1304 519 1297 488 1263 498 1250 491 1223 498 1187 440 1178 436 1100 418 1087 403 986 509 854 511 861 485 856 465 859 414 870 409 860 384V350L817 293 847 277 822 257 824 228"/>
          <path class="spike" d="M1346 675L1395 632"/>
          <path class="hole" d="M851 551L880 600 851 607 858 595 851 575z"/>
          <g class="road">
            <path d="M369 223L363 235 376 277 380 292 396 307 439 314 446 343 462 350 489 375 500 360 531 368M439 220L460 236 484 249 514 274 550 290 560 297M613 243L605 232 632 178M640 200L634 232 613 270 606 300 608 350 604 395 592 410 588 432 575 445 545 450 520 455 518 425 508 394 510 370 540 335 560 297M543 325L543 290 550 265 575 255 610 262M532 340L534 390 530 422 543 440 543 455 556 483 558 500 556 523 545 532M543 455L568 470 605 470 634 478 662 478 678 469M520 425L530 425 545 450M470 490L482 534 503 540 513 528 524 523 543 532 560 555 576 573 580 585 571 606 578 628 583 655 590 680 602 717 617 728 634 740 641 773 670 771 687 764 714 775 736 782 755 811 763 809 779 798 805 814 862 897 868 940 879 960 881 975 900 995 920 1012 945 1034 962 1020 980 998 1015 975 1040 955 1048 940 1050 900 1056 862 1070 836 1105 835 1106 862 1130 893"/>
            <path d="M580 585L613 586 645 562 698 548 702 528 717 511M799 232L796 247 786 261 771 286 776 316 773 400 763 435 760 470 751 492 736 511 727 519 714 543M769 537L760 549 745 550 742 561 726 566 727 583 738 618 714 655 712 675 697 715 684 765M684 765L694 780 695 807 717 837M585 655L609 656 623 675 617 730M1187 440L1172 490 1146 500 1128 500 1115 540 1097 541 1067 576 1072 630 1082 655 1096 724 1072 760 1067 811 1080 818 1083 836M1146 500L1155 515 1177 523 1181 600 1186 640 1200 650 1222 661 1262 600 1270 592 1303 590 1330 568 1346 571M1292 590L1305 565 1312 550 1326 543M1200 650L1192 655 1195 720 1185 741 1155 752 1154 768 1140 787 1133 811 1110 825 1103 840M1222 661L1210 715 1195 725 1186 740M1198 640L1215 630 1230 603 1268 594M808 200L824 228"/>
          </g>
          <g class="ind">
            <path d="M557 290l10 4v10l-9 2-5-7zM582 268l8-3 2 9-9 6zM572 310l5 2v18l-6-3zM482 464l10-3 6 16-9 6-8-10zM525 503l12-10-4 22-9 4zM536 524l11-2-3 7zM508 375l8-14 17-17-3 9-19 26zM1058 864l16-9 10 1-2 12-10 3zM1087 853l18 5 2 7-19-1zM1110 862l7 2 4 10-7-1zM480 460l-3 8 8 2zM416 333l8 2 9 4-4 5-10-4z"/>
            <path class="spot" d="M575 333l3 7M596 258l5-8 4 4M605 258l3 6M578 262l-6 8M560 283l8 2M718 252l11-6M497 469l20-6M466 488l3 12 6-8M554 573l4 5M565 596l6 10M1060 578l4 8 4-6M1265 590l3 8M1130 858l2 8M1085 838l2 7M1038 936l4 6M935 1051v8M606 2l3 8M615 20l2 6"/>
          </g>
          <g class="harbour"><path d="M1057 908l6-8 2 16h6v8l8-2v12l-18-1zM454 452l5 3 7-8-3 10 5 8-9-4z"/><path class="quay" d="M1065 900v18M1059 908v22h18"/></g>
        </g>
      </svg>
    </section>

    <i class="split right"></i>

    <section class="dock toolbox">
      <div class="docktitle"><i class="hgrip"></i><span>Caja de herramientas de procesado</span><i class="hgrip"></i>
        <b><svg viewBox="0 0 10 10"><path d="M3.500 3V1h5.500v5H7M1 3.500h5.500V9H1z" fill="none" stroke="#000" stroke-width="1.500"/></svg></b>
        <b><svg viewBox="0 0 10 10"><path d="M1.500 1.500l7 7M8.500 1.500l-7 7" stroke="#000" stroke-width="1.600"/></svg></b></div>
      <div class="search">Buscar...</div>
      <div class="tree">
        <div class="r"><i class="c x m first"></i><span>Algoritmos usados recientemente</span></div>
        <div class="r k"><i class="c v"></i><i class="c t"></i><svg viewBox="0 0 18 18"><use href="#p-gdal"/></svg><span class="sp">Rasterize (vector to raster)</span></div>
        <div class="r k g"><i class="c v"></i><i class="c t"></i><svg viewBox="0 0 18 18"><use href="#p-grass"/></svg><span class="sp">v.to.rast.attribute - Converts (rasterize) a vector layer into a raster layer.</span></div>
        <div class="r k g"><i class="c v"></i><i class="c t"></i><svg viewBox="0 0 18 18"><use href="#p-grass"/></svg><span>r.walk - Outputs a raster layer showing the anisotropic cumulative cost of moving based on friction cost.</span></div>
        <div class="r k g"><i class="c v"></i><i class="c t"></i><svg viewBox="0 0 18 18"><use href="#p-grass"/></svg><span class="cost">r.cost.full - Creates a raster layer of cumulative cost of moving across a raster layer whose cell values represent cost.</span></div>
        <div class="r k"><i class="c v"></i><i class="c t"></i><svg viewBox="0 0 18 18"><use href="#p-qgis"/></svg><span>Fixed distance buffer</span></div>
        <div class="r k"><i class="c v"></i><i class="c l"></i><svg viewBox="0 0 18 18"><use href="#p-qgis"/></svg><span>Clip</span></div>
        <div class="r k"><i class="c x p"></i><svg viewBox="0 0 18 18"><use href="#p-otb"/></svg><span>Caja de herramientas de Orfeo (análisis de imágenes) [83 geoalgoritmos]</span></div>
        <div class="r k"><i class="c x p"></i><svg viewBox="0 0 18 18"><use href="#p-gdal"/></svg><span>GDAL/OGR [37 geoalgoritmos]</span></div>
        <div class="r k"><i class="c x m"></i><svg viewBox="0 0 18 18"><use href="#p-qgis"/></svg><span>Geoalgoritmos de QGIS [99 geoalgoritmos]</span></div>
        <div class="r"><i class="c v"></i><i class="c x p"></i><span>Database</span></div>
        <div class="r"><i class="c v"></i><i class="c x p"></i><span>Graphics</span></div>
        <div class="r"><i class="c v"></i><i class="c x p"></i><span>Raster general tools</span></div>
        <div class="r"><i class="c v"></i><i class="c x p"></i><span>Raster tools</span></div>
        <div class="r"><i class="c v"></i><i class="c x p"></i><span>Table</span></div>
        <div class="r"><i class="c v"></i><i class="c x p"></i><span>Vector analysis tools</span></div>
        <div class="r"><i class="c v"></i><i class="c x p"></i><span>Vector creation tools</span></div>
        <div class="r"><i class="c v"></i><i class="c x p"></i><span>Vector general tools</span></div>
        <div class="r"><i class="c v"></i><i class="c x p"></i><span>Vector geometry tools</span></div>
        <div class="r"><i class="c v"></i><i class="c x m"></i><span>Vector overlay tools</span></div>
        <div class="r k on"><i class="c v"></i><i class="c v"></i><i class="c t"></i><svg viewBox="0 0 18 18"><use href="#p-qgis"/></svg><span>Clip</span></div>
        <div class="r k"><i class="c v"></i><i class="c v"></i><i class="c t"></i><svg viewBox="0 0 18 18"><use href="#p-qgis"/></svg><span>Difference</span></div>
        <div class="r k"><i class="c v"></i><i class="c v"></i><i class="c t"></i><svg viewBox="0 0 18 18"><use href="#p-qgis"/></svg><span>Intersection</span></div>
        <div class="r k"><i class="c v"></i><i class="c v"></i><i class="c t"></i><svg viewBox="0 0 18 18"><use href="#p-qgis"/></svg><span>Line intersections</span></div>
        <div class="r k"><i class="c v"></i><i class="c v"></i><i class="c t"></i><svg viewBox="0 0 18 18"><use href="#p-qgis"/></svg><span>Split lines with lines</span></div>
        <div class="r k"><i class="c v"></i><i class="c v"></i><i class="c t"></i><svg viewBox="0 0 18 18"><use href="#p-qgis"/></svg><span>Symetrical difference</span></div>
        <div class="r k"><i class="c v"></i><i class="c v"></i><i class="c l"></i><svg viewBox="0 0 18 18"><use href="#p-qgis"/></svg><span>Union</span></div>
        <div class="r"><i class="c v"></i><i class="c x p"></i><span>Vector selection tools</span></div>
        <div class="r"><i class="c v"></i><i class="c x p last"></i><span>Vector table tools</span></div>
        <div class="r k"><i class="c x p"></i><svg viewBox="0 0 18 18"><use href="#p-model"/></svg><span>Modelos [0 geoalgoritmos]</span></div>
        <div class="r k g"><i class="c x p"></i><svg viewBox="0 0 18 18"><use href="#p-grass"/></svg><span>Órdenes de GRASS [168 geoalgoritmos]</span></div>
        <div class="r k"><i class="c x p"></i><svg viewBox="0 0 18 18"><use href="#p-saga"/></svg><span>SAGA (2.1.2) [235 geoalgoritmos]</span></div>
        <div class="r k"><i class="c x p last"></i><svg viewBox="0 0 18 18"><use href="#p-script"/></svg><span>Scripts [0 geoalgoritmos]</span></div>
      </div>
      <div class="combo"><span>Advanced interface</span><em><i class="tri"></i></em></div>
    </section>
  </main>

  <footer class="status">
    <span class="msg">Eliminada una entrada de la leyenda.</span>
    <span class="toggle"><svg viewBox="0 0 18 18"><g transform="rotate(-25 9 9)" fill="none" stroke="#111" stroke-width="1.400"><rect x="4" y="1" width="5" height="9" rx="2.500"/><rect x="10" y="7" width="5" height="9" rx="2.500"/><path d="M4 5h5M10 11h5M5 12l3 4M11 1l3 4"/></g></svg></span>
    <span class="l-coord">Coordenada:</span>
    <span class="field coord">69364,4112803</span>
    <span class="l-scale">Escala</span>
    <span class="field scale"><span>1:1.141.623</span><em><i class="tri"></i></em></span>
    <span class="l-rot">Rotación:</span>
    <span class="field rot"><span>0,0</span><em><i class="tri up"></i><i class="tri"></i></em></span>
    <i class="chk"></i>
    <span class="l-render">Representar</span>
    <svg class="globe" viewBox="0 0 16 16"><circle cx="8" cy="8" r="7" fill="#444"/><circle cx="8" cy="8" r="4.800" fill="#8a8a86"/><path d="M1 8h14M8 0v16M4.500 3.500q-2 4.500 0 9M11.500 3.500q2 4.500 0 9M4 5h8M4 11h8" fill="none" stroke="#222"/></svg>
    <span class="l-epsg">EPSG:25830 (al vuelo)</span>
    <svg class="talk" viewBox="0 0 18 18"><path d="M9 1q8 0 8 6.500 0 5-4.500 6V17l-4-3Q1 13.500 1 7.500 1 1 9 1z" fill="#6a6a68"/></svg>
  </footer>

  <footer class="taskbar">
    <span class="start"><svg viewBox="0 0 16 16"><path d="M1 3q3-2 6 0L6 8Q3 6.500 0 8z" fill="#e8502a"/><path d="M8 3.500q3 1.500 7-.500L14 8q-4 2-7 .500z" fill="#78b833"/><path d="M0 9q3-1.500 6 0l-1 5q-3-1.500-6 0z" fill="#3c7fd6" transform="translate(.8)"/><path d="M7 9.500q3 1.500 7 0L13 14.500q-4 1.500-7 0z" fill="#f5bd2a"/></svg>Inicio</span>
    <span class="task stack"><svg viewBox="0 0 16 16"><path d="M1 2h5l1 1.500h8V13H1z" fill="#f2dc83" stroke="#c8a94a"/><path d="M3.500 15V9q0-1.500 1.500-1.500h6q1.500 0 1.500 1.500v6H10v-3.500H6V15z" fill="#5fb2e6" stroke="#2f7fb6" stroke-width=".600"/></svg></span>
    <svg class="chrome" viewBox="0 0 16 16"><circle cx="8" cy="8" r="8" fill="#f7c91d"/><path d="M8 8L1.200 4A8 8 0 0 1 15 4z" fill="#de3f34"/><path d="M1.200 4A8 8 0 0 0 7.500 16L11 10 8 8z" fill="#32a350"/><circle cx="8" cy="8" r="3.800" fill="#fff"/><circle cx="8" cy="8" r="3" fill="#3d7de0"/></svg>
    <span class="task active"><svg viewBox="0 0 18 18"><use href="#p-qgis"/></svg></span>
    <span class="lang">ES</span>
    <span class="tray">
      <svg viewBox="0 0 8 12" class="chev"><path d="M1 5l3-3 3 3M1 10l3-3 3 3" fill="none" stroke="#000" stroke-width="1.500"/></svg>
      <svg viewBox="0 0 16 16"><path d="M1 6h3l4-4v12l-4-4H1z" fill="#fff" stroke="#555"/><path d="M10 5q2 3 0 6M12 3q4 5 0 10" fill="none" stroke="#777" stroke-width="1.200"/></svg>
      <svg viewBox="0 0 16 16"><rect x="4" y="4" width="11" height="8" fill="#aaa" stroke="#fff"/><rect x="4" y="4" width="11" height="8" fill="none" stroke="#555" stroke-width=".800"/><path d="M6 14.500h8" stroke="#555" stroke-width="1.500"/><rect x="1" y="1" width="4" height="6" fill="#fff" stroke="#555"/><path d="M3 7v7h3" stroke="#555" fill="none"/></svg>
      <svg viewBox="0 0 16 16"><path d="M2 1v14M3 2h5l1 2h5l-2 3 1 3H8L7 9H3" fill="#fff" stroke="#555"/></svg>
      <span class="clock">6:23</span>
      <svg viewBox="0 0 16 16" class="desk"><rect x="1" y="2" width="15" height="12" fill="#2d7be0" stroke="#0e3d85"/><path d="M1 12h15v3H1z" fill="#123a6f"/><circle cx="3.500" cy="13.500" r="1.800" fill="#f5a623"/></svg>
    </span>
  </footer>
</div>
</body>
</html>
```
FILE: styles.css
```css
* { box-sizing: border-box; }
body {
  margin: 0;
  background: #d4d0c8;
  font: 11px/13px "DejaVu Sans Condensed", "DejaVu Sans", sans-serif;
  letter-spacing: -.18px;
  color: #000;
}
.defs { position: absolute; }
svg { display: block; flex: none; }
i, em, b { font-style: normal; font-weight: normal; flex: none; }
.window { width: 2048px; height: 1056px; display: flex; flex-direction: column; overflow: hidden; white-space: nowrap; }

.titlebar {
  height: 18px; flex: none; display: flex; align-items: center; padding: 0 2px 0 3px;
  background: linear-gradient(90deg, #0a246a, #a6caf0);
}
.titlebar h1 { margin: 0 auto 0 3px; font-size: 11px; font-weight: 700; letter-spacing: .02px; color: #fff; }
.winbtns { display: flex; }
.winbtns b, .start, .task {
  background: #d4d0c8; border: 1px solid; border-color: #fff #404040 #404040 #fff;
  box-shadow: inset -1px -1px #808080;
}
.winbtns b { width: 16px; height: 14px; padding: 1px; }
.winbtns svg { width: 12px; height: 10px; }
.winbtns .gap { margin-left: 2px; }

.menubar { height: 24px; flex: none; display: flex; align-items: center; gap: 15px; padding: 4px 9px 0; border-bottom: 1px solid #9c988f; }

.toolbar { height: 39px; flex: none; display: flex; align-items: center; padding-bottom: 2px; border-top: 1px solid #e9e6df; border-bottom: 1px solid #9c988f; }
.ic { width: 24px; height: 24px; margin: 0 5.500px; overflow: visible; }
.off { filter: grayscale(1); opacity: .55; }
.pressed {
  width: 34px; height: 33px; margin-right: 1px; display: grid; place-items: center;
  border: 1px solid #77736b; border-radius: 3px; background: #bbb7ae;
}
.pressed svg { width: 24px; height: 24px; }
.grip {
  width: 6px; height: 30px; margin-left: 9px;
  background:
    radial-gradient(circle at 1.500px 1.500px, #fff 1.100px, transparent 1.300px) 0 0 / 6px 5.300px,
    radial-gradient(circle at 4.500px 4px, #fff 1.100px, transparent 1.300px) 0 0 / 6px 5.300px,
    radial-gradient(circle at 2.500px 2.500px, #aaa69c 1.100px, transparent 1.300px) 0 0 / 6px 5.300px;
}
.grip.first { margin-left: 4px; }
.grip.tight { margin-left: 8px; }
.grip.wide { margin-left: 9px; }
.sep { width: 2px; height: 30px; margin: 0 1px 0 1px; border-left: 1px solid #9c988f; background: #fff; }
.drop { width: 12px; height: 5px; background: #000; clip-path: polygon(1.500px 0, 10.500px 0, 6px 5px); }
.drop.dim { background: #99958c; }

.work { height: 840px; flex: none; display: flex; }
.hgrip {
  height: 6px;
  background:
    radial-gradient(circle at 1.500px 1.500px, #fff 1.100px, transparent 1.300px) 0 0 / 5.300px 6px,
    radial-gradient(circle at 4px 4.500px, #fff 1.100px, transparent 1.300px) 0 0 / 5.300px 6px,
    radial-gradient(circle at 2.500px 2.500px, #b0aca2 1px, transparent 1.300px) 0 0 / 5.300px 6px;
}
.sidebar { width: 52px; border-right: 1px solid #9c988f; display: flex; flex-direction: column; align-items: center; }
.sidebar .hgrip { width: 42px; margin: 6px 0 0; }
.sidebar svg { width: 24px; height: 24px; margin: 5px 0; overflow: visible; }
.sidebar .hgrip + svg { margin-top: 4px; }
.withdrop { display: flex; align-items: center; gap: 5px; padding-right: 0; }

.dock { display: flex; flex-direction: column; }
.docktitle { height: 18px; display: flex; align-items: center; flex: none; }
.docktitle .hgrip { flex: 1; }
.docktitle b { width: 14px; height: 14px; margin-left: 2px; padding: 1px; border: 1px solid #6d6a63; border-radius: 3px; }
.docktitle b svg { width: 10px; height: 10px; }

.layers { width: 307px; padding: 0; }
.layers .docktitle { padding: 0 0 0 3px; }
.layers .docktitle span { padding: 1px 9px 0; }
.layertools { height: 33px; flex: none; display: flex; align-items: center; gap: 14px; padding: 0 0 4px 8px; }
.layertools svg { width: 18px; height: 18px; }
.layertree { height: 788px; border: 2px solid #31447c; border-left-color: #0a246a; border-radius: 3px; background: #fff; font-weight: 700; letter-spacing: .1px; }
.lrow { height: 16px; display: flex; align-items: center; }
.lrow span { padding: 2px 0 0; }
.lrow.sel { background: #0a246a; color: #fff; text-decoration: underline; }
.lrow.sel span { flex: 1; height: 16px; margin-left: -2px; padding-left: 2px; outline: 1px dotted #d8b35c; outline-offset: -1px; }
.br { width: 10px; height: 16px; margin: 0 3px 0 10px; background: repeating-linear-gradient(90deg, #999 0 1px, transparent 1px 2px) 0 8px / 10px 1px no-repeat, repeating-linear-gradient(#999 0 1px, transparent 1px 2px) 0 0 / 1px 100% no-repeat; }
.br.end { background-size: 10px 1px, 1px 9px; }
.chk {
  width: 13px; height: 13px; border: 1px solid #a9a59c; border-radius: 2px;
  background:
    linear-gradient(45deg, transparent 36%, #000 36% 64%, transparent 64%) center / 8px 8px no-repeat,
    linear-gradient(-45deg, transparent 36%, #000 36% 64%, transparent 64%) center / 8px 8px no-repeat, #fff;
}
.sw { width: 16px; height: 16px; margin: 0 5px 0 6px; border: 1px solid #555; }
.sw.port { background: #94ecdf; }
.sw.ind { background: #95746f; }
.sw.zone { background: #ffe9cb; }
.sw.line { height: 1px; border-width: 1px 0 0; }

.split { width: 4px; height: 276px; margin-top: 279px; background: radial-gradient(circle at 1.500px 1.500px, #fff 1px, transparent 1.300px) 0 0 / 4px 5.300px, radial-gradient(circle at 2.200px 2.200px, #a19d94 1.100px, transparent 1.400px) 0 0 / 4px 5.300px; }
.split.left { margin-left: 2px; margin-right: 1px; }
.split.right { margin-left: 1px; margin-right: 0; }

.canvas { width: 988px; height: 839px; border: 1px solid #98948b; border-width: 1px 2px 2px 1px; background: #fff; border-radius: 2px; margin-top: 1px; }
.canvas svg { width: 985px; height: 836px; }
.canvas path { vector-effect: non-scaling-stroke; stroke-linejoin: round; }
.land { fill: #ffe9cb; stroke: #1a1a1a; stroke-width: 1.200px; }
.spike { stroke: #111; stroke-width: 1.500px; }
.hole { fill: #fff; stroke: #222; }
.road { fill: none; stroke: #5c5953; stroke-width: 1px; }
.canvas .ind path { fill: #cb8a63; stroke: #2b1a10; stroke-width: 1px; }
.canvas .ind .spot { fill: none; stroke: #2b1a10; stroke-width: 2px; }
.harbour { fill: #7de6dc; stroke: #143c3a; stroke-width: 1px; }
.canvas .quay { fill: none; stroke: #12302f; stroke-width: 2px; }

.toolbox { flex: 1; padding: 0; }
.toolbox .docktitle { padding: 0 1px 0 5px; }
.toolbox .docktitle span { padding: 1px 17px 0; font-size: 10px; letter-spacing: -.48px; }
.toolbox .docktitle b { margin-left: 1px; }
.toolbox .docktitle .hgrip + b { margin-left: 4px; }
.search, .tree, .combo, .field { border: 1px solid #98948b; border-radius: 3px; background: #fff; }
.search { height: 24px; flex: none; margin: 3px 0 3px; padding: 5px 3px; color: #808080; letter-spacing: -.6px; }
.tree { height: 768px; flex: none; padding: 0; border-width: 2px 1px 2px 1px; }
.r { display: flex; height: 13px; align-items: center; }
.r.k { height: 16px; }
.r span { padding: 1px 0 0 2.500px; }
.r.k span { padding-left: 4px; }
.r.k.g span { padding-left: 2px; }
.r .sp { letter-spacing: -.07px; }
.r .cost { letter-spacing: -.14px; }
.r svg { width: 18px; height: 16px; margin-left: 2px; }
.r.on { background: #d4d0c8; }
.c { width: 20px; align-self: stretch; position: relative;
  --v: repeating-linear-gradient(#8f8f8f 0 1px, transparent 1px 2px);
  --h: repeating-linear-gradient(90deg, #8f8f8f 0 1px, transparent 1px 2px);
  background: var(--v) 10px 0 / 1px 100% no-repeat, var(--h) 10px 50% / 10px 1px no-repeat; }
.c.v { background: var(--v) 10px 0 / 1px 100% no-repeat; }
.c.t { background-size: 1px 100%, 8px 1px; }
.c.l { background-size: 1px 50%, 8px 1px; }
.c.last { background-size: 1px 50%, 10px 1px; }
.c.first { background-position: 10px 6px, 10px 50%; }
.c.x::before { content: ""; position: absolute; left: 6px; top: calc(50% - 5px); width: 9px; height: 9px; border: 1px solid #8a8a8a;
  background: linear-gradient(#333, #333) center / 5px 1px no-repeat, #fff; }
.c.p::before { background: linear-gradient(#333, #333) center / 5px 1px no-repeat, linear-gradient(#333, #333) center / 1px 5px no-repeat, #fff; }
.combo { height: 20px; flex: none; margin-top: 3px; display: flex; align-items: stretch; background: linear-gradient(#cfcbc3, #bcb8af); }
.combo span { flex: 1; padding: 3px 3px 0; }
.combo em { width: 16px; border-left: 1px solid #98948b; display: grid; place-items: center; }
.tri { width: 7px; height: 5px; background: #000; clip-path: polygon(0 0, 100% 0, 50% 100%); }
.tri.up { transform: rotate(180deg); }

.status { height: 30px; flex: none; display: flex; align-items: center; padding-left: 5px; }
.status .msg { width: 1058px; flex: none; }
.status > span, .status > svg, .status > i { flex: none; }
.toggle { width: 20px; height: 20px; border: 1px solid #77736b; border-radius: 3px; display: grid; place-items: center; background: #c6c2b9; }
.toggle svg { width: 17px; height: 17px; }
.l-coord { width: 73.500px; padding-left: 8px; }
.field { height: 20px; display: flex; align-items: stretch; line-height: 18px; padding-top: 0; }
.field em { background: #cdc9c0; border-left: 1px solid #98948b; display: flex; flex-direction: column; align-items: center; justify-content: center; }
.coord { width: 300px; justify-content: center; margin-left: 7px; margin-right: 8px; letter-spacing: -.1px; }
.l-scale { width: 43px; }
.scale { width: 88px; margin-right: 9px; }
.scale span { flex: 1; padding-left: 4px; letter-spacing: 0; }
.scale em { width: 15px; }
.l-rot { width: 56px; }
.rot { width: 98px; height: 25px; line-height: 23px; margin-right: 6px; }
.rot span { flex: 1; padding-left: 4px; letter-spacing: .2px; }
.rot em { width: 15px; gap: 7px; }
.l-render { width: 82px; padding-left: 5px; }
.globe { width: 16px; height: 16px; }
.l-epsg { width: 134px; padding-left: 3px; letter-spacing: -.1px; }
.talk { width: 17px; height: 17px; }

.taskbar { height: 27px; flex: none; display: flex; align-items: center; padding: 0 2px 1px; border-top: 2px solid #fff; }
.start { width: 54px; height: 22px; display: flex; align-items: center; gap: 1px; padding-left: 2px; font-weight: 700; letter-spacing: -.1px; }
.start svg { width: 15px; height: 15px; }
.task { height: 22px; display: grid; place-items: center; }
.stack { width: 31px; margin-left: 9px; padding-right: 4px; box-shadow: inset -1px -1px #808080, inset -3px 0 #d4d0c8, inset -4px 0 #505050; }
.task svg, .chrome { width: 16px; height: 16px; }
.chrome { margin: 0 10px 0 11px; }
.active { width: 31px; background: #fff; border-color: #404040 #fff #fff #404040; box-shadow: inset 1px 1px #808080; }
.lang { margin-left: auto; width: 21px; }
.tray { width: 156px; height: 22px; display: flex; align-items: center; padding-left: 7px; border: 1px solid; border-color: #808080 #fff #fff #808080; }
.tray svg { width: 16px; height: 16px; margin-right: 8px; }
.tray .chev { width: 7px; height: 11px; margin-right: 10px; }
.clock { width: 27px; margin-left: 8px; }
.tray .desk { margin: 0; width: 15px; }
```
